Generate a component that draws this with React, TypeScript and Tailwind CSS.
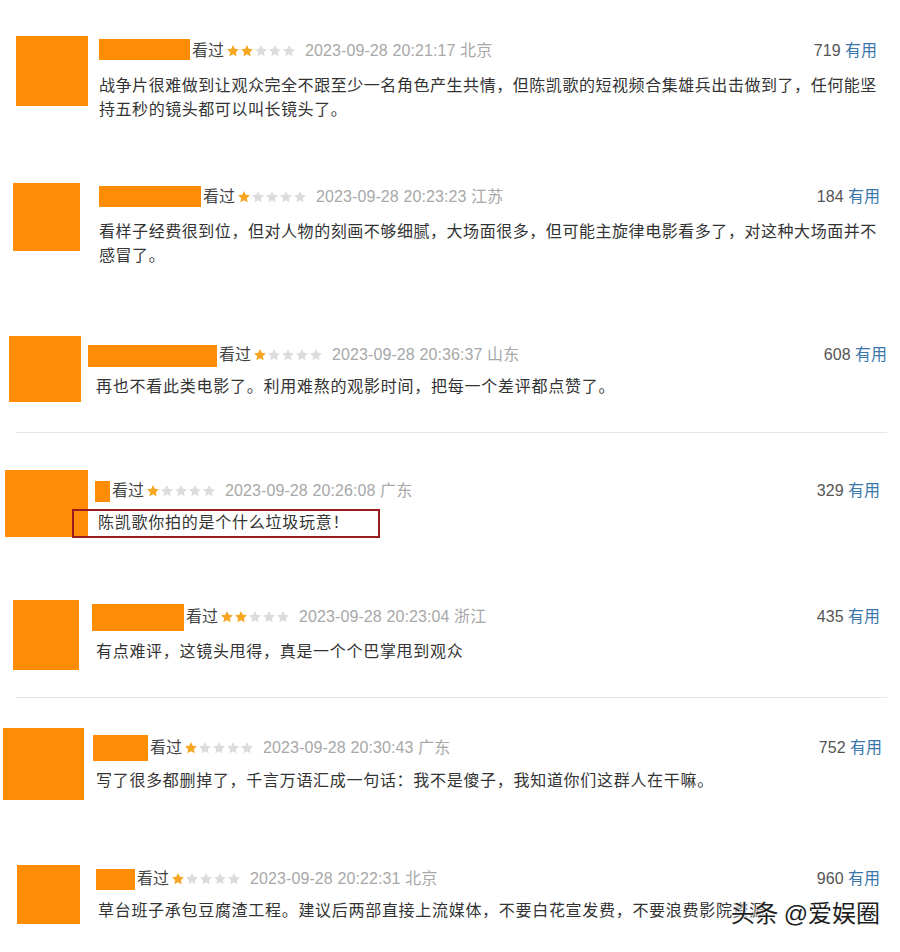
import React from "react";

type Block = {
  wrap: string;
  avatar: string;
  col: string;
  bar: string;
  text: string;
  stars: number;
  date: string;
  count: string;
  lines: string[];
  box?: boolean;
  divider?: string;
};

const blocks: Block[] = [
  {
    wrap: "h-[170px] pt-[36px]",
    avatar: "ml-[16px] w-[72px] h-[70px]",
    col: "ml-[11px] mr-[23px] pt-[3px]",
    bar: "w-[91px] h-[21px] -translate-y-[2px]",
    text: "mt-[11px] ml-0 tracking-[0.55px]",
    stars: 2,
    date: "2023-09-28 20:21:17 北京",
    count: "719",
    lines: [
      "战争片很难做到让观众完全不跟至少一名角色产生共情，但陈凯歌的短视频合集雄兵出击做到了，任何能坚",
      "持五秒的镜头都可以叫长镜头了。",
    ],
  },
  {
    wrap: "h-[150px] pt-[13px]",
    avatar: "ml-[13px] w-[67px] h-[68px]",
    col: "ml-[19px] mr-[20px] pt-[2px]",
    bar: "w-[102px] h-[21px] -translate-y-[1px]",
    text: "mt-[11px] ml-0 tracking-[0.55px]",
    stars: 1,
    date: "2023-09-28 20:23:23 江苏",
    count: "184",
    lines: [
      "看样子经费很到位，但对人物的刻画不够细腻，大场面很多，但可能主旋律电影看多了，对这种大场面并不",
      "感冒了。",
    ],
  },
  {
    wrap: "h-[112px] pt-[16px]",
    avatar: "ml-[9px] w-[72px] h-[66px]",
    col: "ml-[7px] mr-[13px] pt-[7px]",
    bar: "w-[129px] h-[22px] translate-y-[1px]",
    text: "mt-[8px] ml-[8px] tracking-[0.75px]",
    stars: 1,
    date: "2023-09-28 20:36:37 山东",
    count: "608",
    lines: ["再也不看此类电影了。利用难熬的观影时间，把每一个差评都点赞了。"],
    divider: "ml-[16px] mr-[13px]",
  },
  {
    wrap: "h-[147px] pt-[37px]",
    avatar: "ml-[5px] w-[83px] h-[67px]",
    col: "ml-[7px] mr-[20px] pt-[9px]",
    bar: "w-[15px] h-[21px]",
    text: "mt-[8px] ml-[3px] tracking-[0.75px]",
    stars: 1,
    date: "2023-09-28 20:26:08 广东",
    count: "329",
    lines: ["陈凯歌你拍的是个什么垃圾玩意！"],
    box: true,
  },
  {
    wrap: "h-[117px] pt-[20px]",
    avatar: "ml-[13px] w-[66px] h-[70px]",
    col: "ml-[13px] mr-[20px] pt-[5px]",
    bar: "w-[92px] h-[27px]",
    text: "mt-[11px] ml-[4px] tracking-[0.7px]",
    stars: 2,
    date: "2023-09-28 20:23:04 浙江",
    count: "435",
    lines: ["有点难评，这镜头甩得，真是一个个巴掌甩到观众"],
    divider: "ml-[16px] mr-[13px]",
  },
  {
    wrap: "h-[152px] pt-[30px]",
    avatar: "ml-[3px] w-[81px] h-[72px]",
    col: "ml-[9px] mr-[18px] pt-[8px]",
    bar: "w-[55px] h-[26px]",
    text: "mt-[9px] ml-[3px] tracking-[0.7px]",
    stars: 1,
    date: "2023-09-28 20:30:43 广东",
    count: "752",
    lines: ["写了很多都删掉了，千言万语汇成一句话：我不是傻子，我知道你们这群人在干嘛。"],
  },
  {
    wrap: "h-[102px] pt-[15px]",
    avatar: "ml-[17px] w-[63px] h-[59px]",
    col: "ml-[16px] mr-[20px] pt-[2px]",
    bar: "w-[39px] h-[21px]",
    text: "mt-[8px] ml-[2px] tracking-[0.7px]",
    stars: 1,
    date: "2023-09-28 20:22:31 北京",
    count: "960",
    lines: ["草台班子承包豆腐渣工程。建议后两部直接上流媒体，不要白花宣发费，不要浪费影院资源"],
  },
];

function Star({ on }: { on: boolean }) {
  return (
    <svg width="14" height="14" viewBox="0 0 24 24" className="shrink-0">
      <path
        d="M12 1.8l3.05 6.5 7.05.85-5.2 4.85 1.35 7L12 17.5l-6.25 3.5 1.35-7L1.9 9.15l7.05-.85z"
        fill={on ? "#f7a623" : "#dcdcdc"}
      />
    </svg>
  );
}

function Row({ b }: { b: Block }) {
  return (
    <>
      <div className={`flex items-start ${b.wrap}`}>
        <div className={`shrink-0 bg-[#ff8c05] ${b.avatar}`} />
        <div className={`flex-1 flex flex-col ${b.col}`}>
          <div className="flex items-center h-[24px]">
            <div className={`shrink-0 bg-[#ff8c05] ${b.bar}`} />
            <span className="ml-[2px] text-[16px] text-[#444] leading-[24px]">看过</span>
            <span className="ml-[2px] flex items-center">
              {[0, 1, 2, 3, 4].map((i) => (
                <Star key={i} on={i < b.stars} />
              ))}
            </span>
            <span className="ml-[9px] text-[16px] text-[#a8a8a8] leading-[24px] tracking-[0.1px]">
              {b.date}
            </span>
            <span className="ml-auto text-[16px] leading-[24px] whitespace-nowrap">
              <span className="text-[#555]">{b.count}</span>
              <span className="text-[#3a77aa]"> 有用</span>
            </span>
          </div>
          <div className={`relative text-[16px] leading-[24px] text-[#333] ${b.text}`}>
            {b.box && (
              <div className="absolute left-[-26px] top-[-2px] w-[308px] h-[29px] border-2 border-[#9b1c1f]" />
            )}
            {b.lines.map((l, i) => (
              <div key={i} className="whitespace-nowrap">
                {l}
              </div>
            ))}
          </div>
        </div>
      </div>
      {b.divider && <div className={`h-px bg-[#e6e6e6] ${b.divider}`} />}
    </>
  );
}

export default function App() {
  return (
    <div
      className="relative w-[900px] h-[952px] overflow-hidden bg-white"
      style={{ fontFamily: '"Liberation Sans", "Noto Sans CJK SC", sans-serif' }}
    >
      {blocks.map((b, i) => (
        <Row key={i} b={b} />
      ))}
      <div className="absolute right-[20px] top-[897px] flex items-center text-[24px] leading-[34px] text-[#1e1e1e] [text-shadow:0_0_2px_#fff,0_0_2px_#fff,0_0_3px_#fff]">
        <span>头条</span>
        <span className="ml-[5px]">@爱娱圈</span>
      </div>
    </div>
  );
}
